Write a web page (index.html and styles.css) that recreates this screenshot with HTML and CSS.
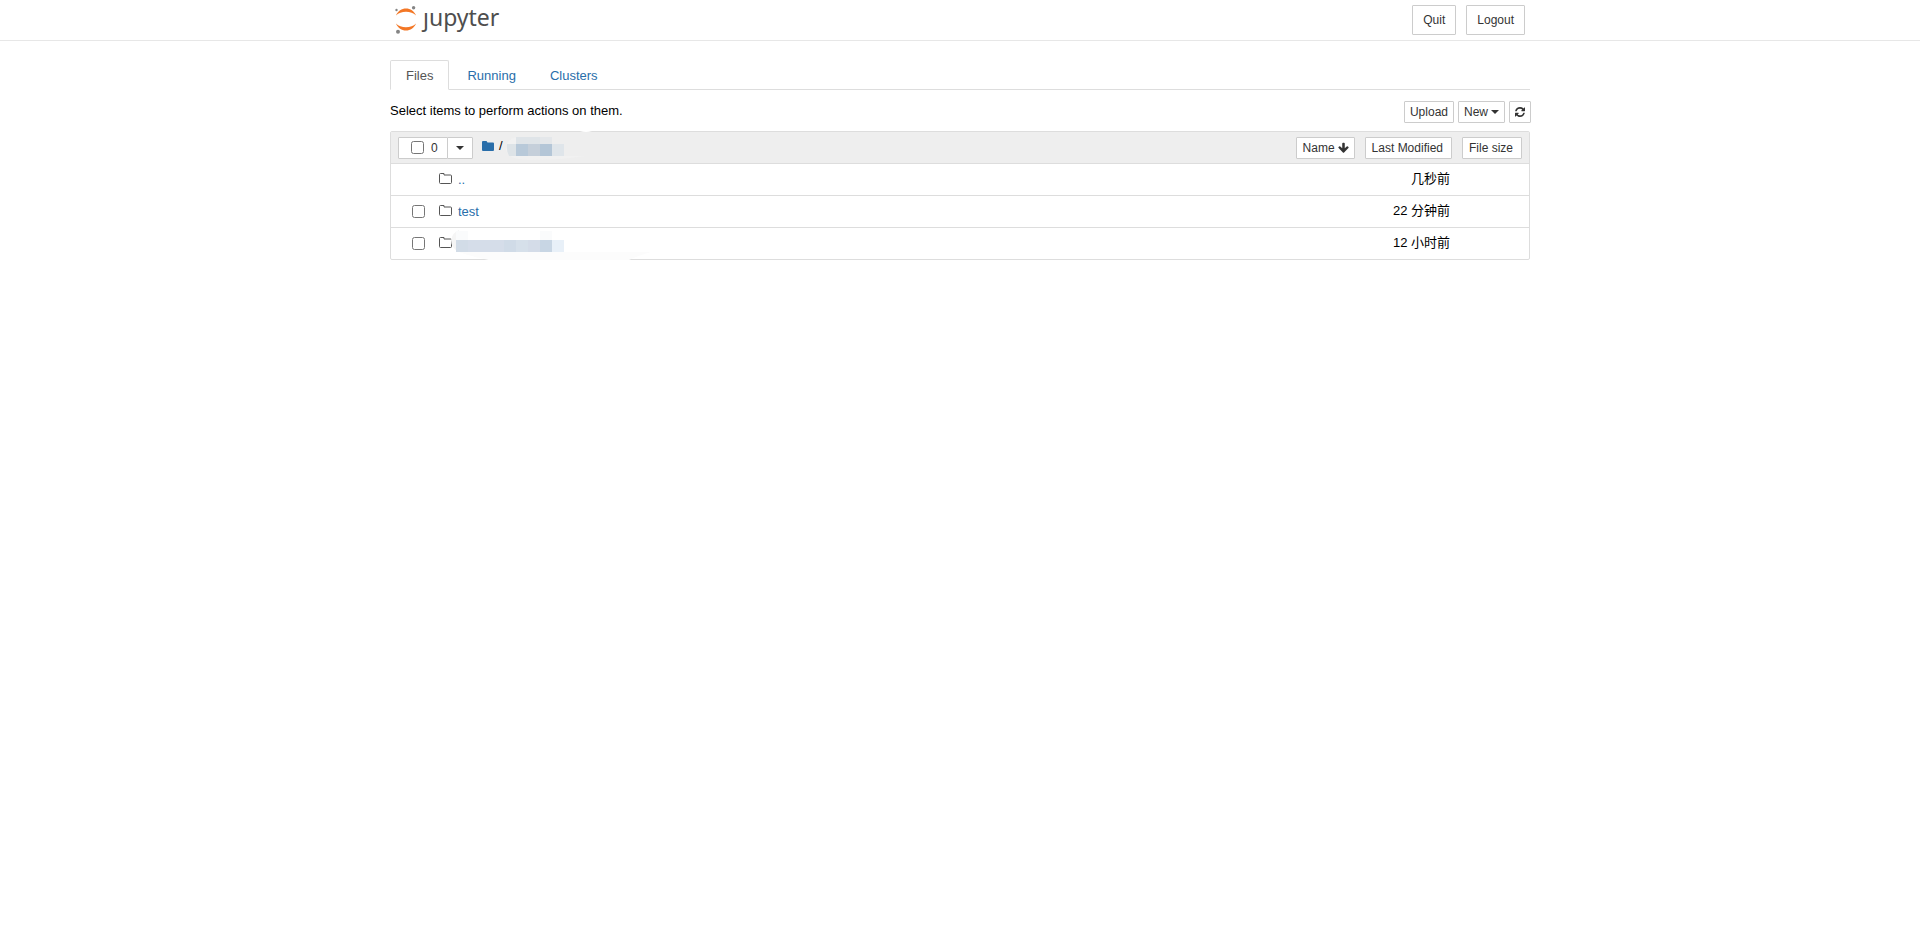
FILE: index.html
```html
<!DOCTYPE html>
<html lang="zh-CN">
  <head>
    <meta charset="UTF-8" />
    <meta name="viewport" content="width=device-width, initial-scale=1" />
    <title>Home</title>
    <link rel="stylesheet" href="styles.css">
  </head>
  <body>
    <!-- shared icons -->
    <svg class="sprite" aria-hidden="true">
      <symbol id="icon-folder" viewBox="0 0 12 10">
        <path d="M1 0h3.500l1 1.500H11q1 0 1 1V9q0 1-1 1H1q-1 0-1-1V1q0-1 1-1z"/>
      </symbol>
      <symbol id="icon-folder-o" viewBox="0 0 13 11">
        <path fill="none" stroke="currentColor" d="M1.500.5h3.500v1.500h6.500q1 0 1 1v6.500q0 1-1 1h-10q-1 0-1-1v-8q0-1 1-1z"/>
      </symbol>
      <symbol id="icon-refresh" viewBox="0 0 1536 1536">
        <path d="M1511 928q0 5-1 7-64 268-268 434.500T764 1536q-146 0-282.500-55T238 1324l-129 129q-19 19-45 19t-45-19-19-45V960q0-26 19-45t45-19h448q26 0 45 19t19 45-19 45l-137 137q71 66 161 102t187 36q134 0 250-65t186-179q11-17 53-117 8-23 30-23h192q13 0 22.500 9.500t9.500 22.500zm25-800v448q0 26-19 45t-45 19h-448q-26 0-45-19t-19-45 19-45l138-138Q969 256 768 256q-134 0-250 65T332 500q-11 17-53 117-8 23-30 23H50q-13 0-22.500-9.500T18 608v-7q65-268 270-434.500T768 0q146 0 284 55.500T1297 212l130-129q19-19 45-19t45 19 19 45z"/>
      </symbol>
      <symbol id="icon-arrow-down" viewBox="0 0 1664 1664">
        <path d="M1611 832q0 53-37 90l-651 652q-39 37-91 37-53 0-90-37L91 922q-38-36-38-90 0-53 38-91l74-75q39-37 91-37 53 0 90 37l294 294V256q0-52 38-90t90-38h128q52 0 90 38t38 90v704l294-294q37-37 90-37 52 0 91 37l75 75q37 39 37 91z"/>
      </symbol>
    </svg>

    <header class="header">
      <div class="container header-inner">
        <a class="logo" href="#">
          <svg class="logo-mark" viewBox="0 0 24 30" aria-hidden="true">
            <path class="orbit" d="M1 10.500C3 5.700 6.600 3.500 11 3.500s8 2.200 10 7C18.500 8 15 6.800 11 6.800S3.500 8 1 10.500z"/>
            <path class="orbit" d="M1 18.500C3 23.300 6.600 25.500 11 25.500s8-2.200 10-7C18.500 21 15 22.200 11 22.200S3.500 21 1 18.500z"/>
            <circle class="moon" cx="1.500" cy="5" r="1.200"/>
            <circle class="moon" cx="18.600" cy="2.800" r="1.700"/>
            <circle class="moon" cx="3" cy="26.700" r="2"/>
          </svg>
          <span class="logo-text">ȷupyter</span>
        </a>
        <div class="header-buttons">
          <button class="btn">Quit</button>
          <button class="btn">Logout</button>
        </div>
      </div>
    </header>

    <main class="container">
      <nav class="tabs">
        <a class="tab active" href="#files">Files</a>
        <a class="tab" href="#running">Running</a>
        <a class="tab" href="#clusters">Clusters</a>
      </nav>

      <div class="toolbar">
        <p class="hint">Select items to perform actions on them.</p>
        <div class="toolbar-buttons">
          <button class="btn btn-xs">Upload</button>
          <button class="btn btn-xs">New <span class="caret"></span></button>
          <button class="btn btn-xs" aria-label="Refresh"><svg class="icon-refresh"><use href="#icon-refresh"/></svg></button>
        </div>
      </div>

      <div class="list" id="files">
        <div class="list-header">
          <div class="select-group">
            <label class="btn btn-xs select-all"><input type="checkbox" /><span>0</span></label>
            <button class="btn btn-xs select-menu" aria-label="Select by type"><span class="caret"></span></button>
          </div>
          <div class="breadcrumb">
            <a class="home" href="#" aria-label="Home"><svg class="icon-home"><use href="#icon-folder"/></svg></a>
            <span>/</span>
            <svg class="crumb-mask" viewBox="0 0 86 30" aria-hidden="true">
              <path fill="#f1f1f1" d="M12 6h34v19h32q-22 4-55 4Q0 29 0 17 0 8 12 6z"/>
              <path fill="#dfe4e8" d="M10 6h24v7H10z"/>
              <path fill="#e4e7ea" d="M34 6h12v7H34z"/>
              <path fill="#dde3e7" d="M1 13h9v12H3q-3-6-2-12z"/>
              <path fill="#b8c9d9" d="M10 13h12v12H10z"/>
              <path fill="#c5cfda" d="M22 13h12v12H22z"/>
              <path fill="#b4c6d7" d="M34 13h12v12H34z"/>
              <path fill="#dfe5ea" d="M46 13h12v12H46z"/>
              <path fill="#fff" d="M74 0h12q-6 2-12 0z"/>
            </svg>
          </div>
          <div class="sort-buttons">
            <button class="btn btn-xs sort">Name <svg class="icon-arrow"><use href="#icon-arrow-down"/></svg></button>
            <button class="btn btn-xs sort sort-plain">Last Modified</button>
            <button class="btn btn-xs sort sort-plain">File size</button>
          </div>
        </div>

        <div class="row">
          <span class="check-space"></span>
          <svg class="icon-folder"><use href="#icon-folder-o"/></svg>
          <a class="name" href="#">..</a>
          <span class="time">几秒前</span>
        </div>
        <div class="row">
          <input type="checkbox" aria-label="test" />
          <svg class="icon-folder"><use href="#icon-folder-o"/></svg>
          <a class="name" href="#">test</a>
          <span class="time">22 分钟前</span>
        </div>
        <div class="row">
          <input type="checkbox" aria-label="Folder" />
          <svg class="icon-folder"><use href="#icon-folder-o"/></svg>
          <span class="name">
            <svg class="name-mask" viewBox="0 0 200 34" aria-hidden="true">
              <path fill="#fcfcfc" d="M8 22h192q-14 4-22 8-40 4-100 4Q38 33 8 22z"/>
              <path fill="#f5f5f5" d="M8 0v22Q0 18 0 10 2 2 8 0z"/>
              <path fill="#fafbfc" d="M5 1h12v9H5zM89 1h12v9H89z"/>
              <path fill="#d2dce7" d="M5 10h12v12H5z"/>
              <path fill="#d5dde9" d="M17 10h36v12H17z"/>
              <path fill="#d0dbe7" d="M53 10h12v12H53z"/>
              <path fill="#d6e0ea" d="M65 10h12v12H65z"/>
              <path fill="#d4dce8" d="M77 10h12v12H77z"/>
              <path fill="#c8d6e4" d="M89 10h12v12H89z"/>
              <path fill="#e8f0f8" d="M101 10h12v12h-12z"/>
            </svg>
          </span>
          <span class="time">12 小时前</span>
        </div>
      </div>
    </main>
  </body>
</html>
```

FILE: styles.css
```css
* {
  box-sizing: border-box;
}

body {
  margin: 0;
  background: #fff;
  color: #000;
  font-family: "Liberation Sans", Arial, "Noto Sans CJK SC", sans-serif;
  font-size: 13px;
  line-height: 20px;
}

a {
  color: #296eaa;
  text-decoration: none;
}

svg {
  display: block;
  fill: currentColor;
}

input[type="checkbox"] {
  width: 13px;
  height: 13px;
  margin: 0;
}

.sprite {
  display: none;
}

.container {
  max-width: 1140px;
  margin: 0 auto;
}

/* Header */
.header {
  border-bottom: 1px solid #e7e7e7;
}

.header-inner {
  display: flex;
  justify-content: space-between;
  padding: 5px;
}

.logo {
  display: flex;
  gap: 4px;
  color: #4e4e4e;
}

.logo-mark {
  width: 24px;
  height: 30px;
}

.orbit {
  fill: #f37726;
}

.moon {
  fill: #858585;
}

.logo-text {
  font-family: "Noto Sans", sans-serif;
  font-size: 23px;
  line-height: 24px;
}

.header-buttons {
  display: flex;
  gap: 10px;
}

/* Buttons */
.btn {
  padding: 5px 10px;
  border: 1px solid #ccc;
  border-radius: 1px;
  background: #fff;
  color: #333;
  font-family: inherit;
  font-size: 12px;
  line-height: 18px;
  white-space: nowrap;
}

.btn-xs {
  display: flex;
  align-items: center;
  gap: 3px;
  height: 22px;
  padding: 0 5px;
}

.caret {
  border-top: 4px solid #333;
  border-right: 4px solid transparent;
  border-left: 4px solid transparent;
}

/* Tabs */
.tabs {
  display: flex;
  gap: 2px;
  margin-top: 19px;
  border-bottom: 1px solid #ddd;
}

.tab {
  padding: 5px 15px 3px;
  margin-bottom: -1px;
  border: 1px solid transparent;
  border-radius: 2px 2px 0 0;
}

.tab.active {
  border-color: #ddd;
  border-bottom-color: #fff;
  background: #fff;
  color: #555;
}

/* Toolbar */
.toolbar {
  display: flex;
  justify-content: space-between;
  margin: 11px -1px 8px 0;
}

.hint {
  margin: 0;
}

.toolbar-buttons {
  display: flex;
  gap: 4px;
}

.icon-refresh {
  width: 10px;
  height: 10px;
}

/* File list */
.list {
  border: 1px solid #ddd;
  border-radius: 2px;
}

.list-header {
  display: flex;
  align-items: center;
  height: 31px;
  padding: 0 7px;
  background: #eee;
}

.select-group {
  display: flex;
}

.select-all {
  gap: 7px;
  width: 50px;
  padding-left: 12px;
}

.select-menu {
  justify-content: center;
  width: 26px;
  margin-left: -1px;
}

.breadcrumb {
  position: relative;
  display: flex;
  gap: 5px;
  padding: 0 0 4px 9px;
}

.home {
  display: flex;
  align-items: center;
}

.icon-home {
  width: 12px;
  height: 10px;
}

.crumb-mask {
  position: absolute;
  top: -5px;
  left: 33px;
  width: 86px;
  height: 30px;
}

.sort-buttons {
  display: flex;
  gap: 10px;
  margin-left: auto;
}

.sort {
  padding-left: 6px;
}

.sort-plain {
  padding-right: 8px;
}

.icon-arrow {
  width: 11px;
  height: 11px;
}

.row {
  display: flex;
  align-items: center;
  min-height: 32px;
  padding: 0 79px 0 21px;
  border-top: 1px solid #ddd;
}

.check-space {
  width: 13px;
}

.icon-folder {
  width: 13px;
  height: 11px;
  margin: 0 6px 2px 14px;
  color: #555;
}

.name {
  position: relative;
  flex: 1;
}

.name-mask {
  position: absolute;
  top: -14px;
  left: -7px;
  width: 200px;
  height: 34px;
}

.time {
  padding-bottom: 2px;
}
```
